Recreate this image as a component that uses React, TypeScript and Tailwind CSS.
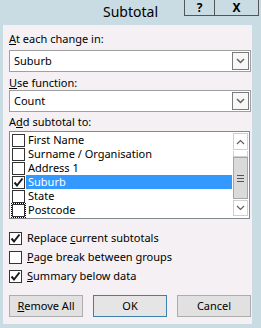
import React from 'react';

const ROWS = [
  { label: 'First Name', checked: false },
  { label: 'Surname / Organisation', checked: false },
  { label: 'Address 1', checked: false },
  { label: 'Suburb', checked: true, selected: true },
  { label: 'State', checked: false },
  { label: 'Postcode', checked: false, focus: true },
];

function Check() {
  return (
    <svg width="11" height="11" viewBox="0 0 11 11" className="block">
      <path d="M1.5 5.5 L4 8.5 L9.5 1.5" fill="none" stroke="#1a1a1a" strokeWidth="2" />
    </svg>
  );
}

function Box({ checked, focus }: { checked?: boolean; focus?: boolean }) {
  return (
    <span
      className={
        'flex items-center justify-center w-[13px] h-[13px] bg-white border border-[#333] shrink-0 ' +
        (focus ? 'outline outline-1 outline-dotted outline-black' : '')
      }
    >
      {checked && <Check />}
    </span>
  );
}

function Combo({ value }: { value: string }) {
  return (
    <div className="flex items-stretch h-[22px] bg-white border border-[#a0a0a0]">
      <span className="flex-1 pl-[4px] leading-[20px]">{value}</span>
      <span className="flex items-center justify-center w-[17px] my-[1px] mr-[1px] border border-[#7a7a7a] bg-[#f7f7f7]">
        <svg width="9" height="6" viewBox="0 0 9 6">
          <path d="M1 1 L4.5 4.5 L8 1" fill="none" stroke="#606060" strokeWidth="1.5" />
        </svg>
      </span>
    </div>
  );
}

export default function App() {
  return (
    <div className="w-[261px] h-[328px] bg-[#c9dbe3] overflow-hidden text-[11px] text-black font-['Segoe_UI','Noto_Sans',sans-serif]">
      <div className="relative h-[25px] flex items-center justify-center">
        <span className="text-[14px] leading-[20px] -mt-[1px]">Subtotal</span>
        <div className="absolute top-0 right-[2px] flex h-[16px] border border-t-0 border-[#555]">
          <span className="w-[30px] flex items-center justify-center font-bold text-[12px] border-r border-[#555]">?</span>
          <span className="w-[43px] flex items-center justify-center font-bold text-[12px]">X</span>
        </div>
      </div>

      <div className="ml-[3px] w-[249px] h-[299px] bg-[#f4f0f4] pl-[6px] pt-[6px]">
        <div className="w-[242px]">
          <div className="h-[16px] leading-[16px]">
            <u>A</u>t each change in:
          </div>
          <div className="mt-[3px]">
            <Combo value="Suburb" />
          </div>
          <div className="h-[15px] leading-[16px] mt-[3px]">
            <u>U</u>se function:
          </div>
          <Combo value="Count" />
          <div className="h-[16px] leading-[16px] mt-[2px]">
            A<u>d</u>d subtotal to:
          </div>

          <div className="mt-[1px] w-[241px] h-[88px] bg-white border border-[#828790] flex">
            <div className="flex-1 pt-[1px]">
              {ROWS.map((r) => (
                <div key={r.label} className="flex items-center h-[14px] pl-[2px]">
                  <Box checked={r.checked} focus={r.focus} />
                  <span
                    className={
                      'flex-1 h-[14px] leading-[14px] pl-[2px] ml-[1px] overflow-hidden ' +
                      (r.selected ? 'bg-[#3399ff] text-white' : '')
                    }
                  >
                    {r.label}
                  </span>
                </div>
              ))}
            </div>
            <div className="w-[17px] flex flex-col bg-white">
              <div className="h-[17px] m-[1px] border border-[#d0d0d0] flex items-center justify-center">
                <svg width="9" height="6" viewBox="0 0 9 6">
                  <path d="M1 5 L4.5 1.5 L8 5" fill="none" stroke="#606060" strokeWidth="1.2" />
                </svg>
              </div>
              <div className="h-[6px] mx-[1px] border-x border-b border-[#d0d0d0]" />
              <div className="h-[42px] mx-[1px] bg-[#dadada] border border-[#a6a6a6] flex flex-col items-center justify-center gap-[2px]">
                <span className="w-[7px] h-[1px] bg-[#555]" />
                <span className="w-[7px] h-[1px] bg-[#555]" />
                <span className="w-[7px] h-[1px] bg-[#555]" />
              </div>
              <div className="h-[16px] m-[1px] border border-[#d0d0d0] flex items-center justify-center">
                <svg width="9" height="6" viewBox="0 0 9 6">
                  <path d="M1 1 L4.5 4.5 L8 1" fill="none" stroke="#606060" strokeWidth="1.2" />
                </svg>
              </div>
            </div>
          </div>

          <div className="mt-[10px] flex flex-col">
            <label className="flex items-center h-[19px] gap-[5px]">
              <Box checked />
              <span>
                Replace <u>c</u>urrent subtotals
              </span>
            </label>
            <label className="flex items-center h-[19px] gap-[5px]">
              <Box />
              <span>
                <u>P</u>age break between groups
              </span>
            </label>
            <label className="flex items-center h-[19px] gap-[5px]">
              <Box checked />
              <span>
                <u>S</u>ummary below data
              </span>
            </label>
          </div>

          <div className="mt-[9px] flex gap-[10px]">
            <button className="w-[74px] h-[22px] bg-[#e1e1e1] border border-[#adadad]">
              <u>R</u>emove All
            </button>
            <button className="w-[74px] h-[22px] bg-[#e5e5e5] border border-[#3c7fb1]">OK</button>
            <button className="w-[74px] h-[22px] bg-[#e1e1e1] border border-[#adadad]">Cancel</button>
          </div>
        </div>
      </div>
    </div>
  );
}
